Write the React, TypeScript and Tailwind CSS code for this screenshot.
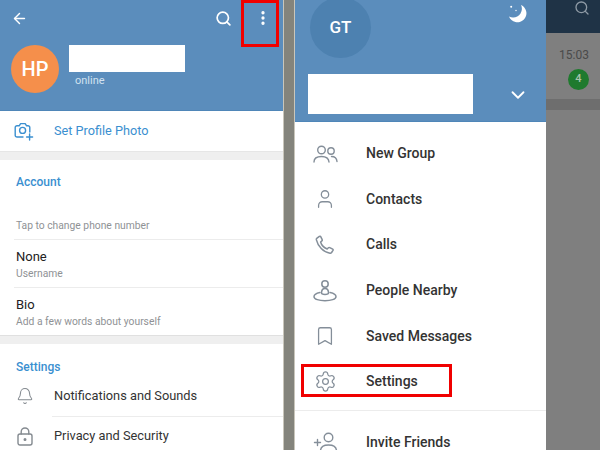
// Two phone screens side by side: profile page and the navigation drawer.
import { ArrowLeft, Bell, Bookmark, ChevronDown, MoreVertical, Search, Settings, User } from 'lucide-react';
import type { ReactNode } from 'react';

function SettingRow({ value, hint, height = 'h-[48px]', line = true }: { value?: string; hint: string; height?: string; line?: boolean }) {
  return (
    <div className={`ml-[14px] flex shrink-0 flex-col justify-end pb-[5px] pl-[2px] ${height} ${line ? 'border-b border-[#ececec]' : ''}`}>
      {value && <p className="text-[13px] leading-[18px] text-[#222]">{value}</p>}
      <p className="text-[10.3px] leading-[16px] text-[#8f9295]">{hint}</p>
    </div>
  );
}

function DrawerRow({ icon, label }: { icon: ReactNode; label: string }) {
  return (
    <div className="flex h-[45.6px] shrink-0 items-center">
      <div className="mr-[11px] flex w-[60px] justify-center text-[#848e99]">{icon}</div>
      <span className="text-[14px] font-medium text-[#333]">{label}</span>
    </div>
  );
}

function CameraPlus() {
  return (
    <svg width="20" height="19" viewBox="0 0 20 19" fill="none" stroke="#3a8fd0" strokeWidth="1.4" strokeLinecap="round" strokeLinejoin="round">
      <path d="M9 15H3a1.8 1.8 0 0 1-1.8-1.8V5.6A1.8 1.8 0 0 1 3 3.8h2.2L6.6 1.6h4.6l1.4 2.2H14a1.8 1.8 0 0 1 1.8 1.8V10" />
      <circle cx="8.6" cy="8.4" r="3" />
      <path d="M15.6 12v6M12.6 15h6" />
    </svg>
  );
}

function Moon() {
  return (
    <svg width="20" height="20" viewBox="0 0 20 20" fill="white">
      <path d="M13 1a9 9 0 1 1-12 11.4c1.4.7 2.6 1 4 1A8.6 8.6 0 0 0 13 1Z" />
      <circle cx="3.2" cy="2.8" r="1" />
      <circle cx="8" cy="6.5" r=".7" />
    </svg>
  );
}

function Padlock() {
  return (
    <svg width="16" height="19" viewBox="0 0 16 19" fill="none" stroke="currentColor" strokeWidth="1.4" strokeLinecap="round" strokeLinejoin="round">
      <rect x="1" y="7" width="14" height="11" rx="2" />
      <path d="M4.2 7V4.8a3.8 3.8 0 0 1 7.6 0V7" />
      <circle cx="8" cy="12.500" r=".8" fill="currentColor" />
    </svg>
  );
}

function Group() {
  return (
    <svg width="25" height="18" viewBox="0 0 25 18" fill="none" stroke="currentColor" strokeWidth="1.4" strokeLinecap="round">
      <circle cx="8.500" cy="5" r="3.800" />
      <path d="M1 17c0-3.800 3.400-5.500 7.500-5.500s7.200 1.700 7.500 5.500" />
      <circle cx="18" cy="6" r="3.200" />
      <path d="M18.500 11.500c3 0 5.200 1.500 5.500 5" />
    </svg>
  );
}

function Handset() {
  return (
    <svg width="20" height="20" viewBox="0 0 20 20" fill="none" stroke="currentColor" strokeWidth="1.5" strokeLinecap="round" strokeLinejoin="round">
      <path d="M2 3.200 4.400 1.400c.5-.3 1-.2 1.300.3l1.500 3c.2.5.1.9-.3 1.200L5.600 7c.8 3 3.400 5.700 6.600 7l1.200-1.200c.4-.4.8-.4 1.300-.2l3 1.500c.5.3.6.8.3 1.300l-1.400 2.100c-.4.5-1 .8-1.600.7C8.500 17.200 2.700 11 1.300 4.700c-.1-.6.2-1.100.7-1.500Z" />
    </svg>
  );
}

function Nearby() {
  return (
    <svg width="26" height="24" viewBox="0 0 26 24" fill="none" stroke="currentColor" strokeWidth="1.5" strokeLinecap="round" strokeLinejoin="round">
      <circle cx="13" cy="5" r="3.200" />
      <path d="M9.500 14c0-3 1.400-4.600 3.500-4.600s3.500 1.600 3.500 4.600c0 1-1 1.400-3.500 1.400S9.500 15 9.500 14Z" />
      <path d="M8 13.500c-3.600.7-6 2.200-6 4.200 0 2.400 5 4 11 4s11-1.600 11-4c0-2-2.400-3.500-6-4.200" />
    </svg>
  );
}

function InvitePerson() {
  return (
    <svg width="25" height="20" viewBox="0 0 25 20" fill="none" stroke="currentColor" strokeWidth="1.4" strokeLinecap="round">
      <circle cx="15.500" cy="5.500" r="4.300" />
      <path d="M7.500 19c0-4 3.500-6 8-6s8 2 8 6" />
      <path d="M4.500 7.500v6M1.500 10.500h6" />
    </svg>
  );
}

export default function App() {
  return (
    <div className="relative flex h-[450px] w-[600px] overflow-hidden bg-white font-['Roboto',sans-serif]">
      {/* profile page */}
      <div className="flex w-[283px] shrink-0 flex-col">
        <div className="h-[111px] shrink-0 border-b border-[#4f86b8] bg-[#5b8dbc] pl-[11px] pt-[7px]">
          <div className="flex h-[22px] items-center pr-[11px] text-white">
            <ArrowLeft size={17} strokeWidth={2} />
            <Search size={17} strokeWidth={2.4} className="ml-auto mr-[22px]" />
            <MoreVertical size={18} strokeWidth={2.4} />
          </div>
          <div className="mt-[16px] flex">
            <div className="flex h-[48px] w-[48px] items-center justify-center rounded-full bg-[#f58f4b] text-[20px] font-medium text-white">
              HP
            </div>
            <div className="ml-[10px]">
              <div className="h-[27px] w-[116px] bg-white" />
              <p className="ml-[6px] mt-[1px] text-[11px] leading-[16px] text-[#d2e2f0]">online</p>
            </div>
          </div>
        </div>

        <div className="flex h-[40px] shrink-0 items-center pl-[14px]">
          <CameraPlus />
          <span className="ml-[20px] text-[12.7px] text-[#3a8fd0]">Set Profile Photo</span>
        </div>
        <div className="h-[9px] shrink-0 border-t border-[#e6e6e6] bg-[#efefef]" />

        <div className="flex h-[44px] shrink-0 items-center pl-[16px]">
          <span className="text-[12px] font-medium text-[#3a8fd0]">Account</span>
        </div>
        <SettingRow hint="Tap to change phone number" height="h-[36px]" />
        <SettingRow value="None" hint="Username" />
        <SettingRow value="Bio" hint="Add a few words about yourself" height="h-[47px]" line={false} />
        <div className="h-[9px] shrink-0 border-t border-[#e0e0e0] bg-[#efefef]" />

        <div className="flex h-[32px] shrink-0 items-end pl-[16px]">
          <span className="text-[12px] font-medium text-[#3a8fd0]">Settings</span>
        </div>
        <div className="flex h-[40px] shrink-0 items-center pl-[16px] text-[#848a90]">
          <Bell size={18} strokeWidth={1.4} />
          <span className="ml-[20px] text-[12.8px] text-[#333]">Notifications and Sounds</span>
        </div>
        <div className="ml-[52px] h-px shrink-0 bg-[#ececec]" />
        <div className="flex h-[38px] shrink-0 items-center pl-[17px] text-[#848a90]">
          <Padlock />
          <span className="ml-[21px] text-[12.8px] text-[#333]">Privacy and Security</span>
        </div>
      </div>

      {/* gutter between the two shots */}
      <div className="w-[12px] shrink-0 border-x border-[#c9c6bb] bg-[#84847c]" />

      {/* drawer */}
      <div className="flex w-[251px] shrink-0 flex-col">
        <div className="h-[122px] shrink-0 border-b border-[#4f86b8] bg-[#5b8dbc] pl-[13px]">
          <div className="flex items-start">
            <div className="-mt-[3px] ml-[2px] flex h-[61px] w-[61px] items-center justify-center rounded-full bg-[#4d81b0] text-[17px] font-medium text-white">
              GT
            </div>
            <div className="ml-auto mr-[18px] mt-[4px]">
              <Moon />
            </div>
          </div>
          <div className="mt-[16px] flex items-center">
            <div className="h-[40px] w-[165px] bg-white" />
            <ChevronDown size={22} strokeWidth={2} className="ml-[34px] mt-[1px] text-white" />
          </div>
        </div>
        <div className="h-[9px] shrink-0" />
        <DrawerRow icon={<Group />} label="New Group" />
        <DrawerRow icon={<User size={22} strokeWidth={1.4} />} label="Contacts" />
        <DrawerRow icon={<Handset />} label="Calls" />
        <DrawerRow icon={<Nearby />} label="People Nearby" />
        <DrawerRow icon={<Bookmark size={22} strokeWidth={1.4} />} label="Saved Messages" />
        <DrawerRow icon={<Settings size={23} strokeWidth={1.3} />} label="Settings" />
        <div className="mt-[5px] h-px shrink-0 bg-[#ececec]" />
        <div className="shrink-0 pt-[9px]">
          <DrawerRow icon={<InvitePerson />} label="Invite Friends" />
        </div>
      </div>

      {/* chat list dimmed behind the drawer */}
      <div className="flex flex-1 flex-col bg-[#7f7f7f]">
        <div className="flex h-[33px] shrink-0 justify-end bg-[#1f3346] pr-[10px] text-[#8e9aa5]">
          <Search size={16} strokeWidth={2} />
        </div>
        <div className="flex h-[66px] shrink-0 flex-col items-end pr-[11px] pt-[14px]">
          <span className="text-[12px] leading-[16px] text-[#4a4a4a]">15:03</span>
          <span className="mt-[6px] flex h-[21px] w-[21px] items-center justify-center rounded-full bg-[#1f7a2e] text-[11px] font-medium text-[#a9c4ad]">
            4
          </span>
        </div>
        <div className="h-[11px] shrink-0 bg-[#6e6e6e]" />
      </div>

      {/* red callouts drawn over the screenshot */}
      <div className="absolute left-[241px] top-0 h-[47px] w-[38px] border-[3px] border-[#f00000]" />
      <div className="absolute left-[301px] top-[364px] h-[33px] w-[151px] border-[3px] border-[#f00000]" />
    </div>
  );
}
